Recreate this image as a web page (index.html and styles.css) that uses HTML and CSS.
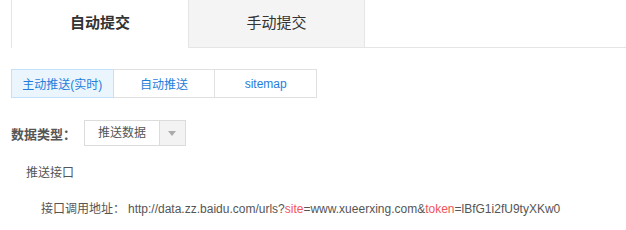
FILE: index.html
```html
<!DOCTYPE html>
<html>
<head>
  <title>链接提交</title>
  <link rel="stylesheet" href="styles.css">
</head>
<body>
  <section class="submit-wrap">
    <div class="tabs">
      <div class="tab tab-active">自动提交</div>
      <div class="tab">手动提交</div>
      <div class="tab-rest"></div>
    </div>

    <div class="btn-group">
      <button class="btn-opt btn-active">主动推送(实时)</button>
      <button class="btn-opt">自动推送</button>
      <button class="btn-opt">sitemap</button>
    </div>

    <div class="form-row">
      <span class="form-label">数据类型：</span>
      <div class="select-box">
        <span class="select-text">推送数据</span>
        <span class="select-arrow"></span>
      </div>
    </div>

    <h3 class="sub-title">推送接口</h3>

    <div class="api-row">
      <span class="api-label">接口调用地址：</span>
      <span class="api-url">http://data.zz.baidu.com/urls?<em class="hl">site</em>=www.xueerxing.com&amp;<em class="hl">token</em>=lBfG1i2fU9tyXKw0</span>
    </div>
  </section>
</body>
</html>
```

FILE: styles.css
```css
* {
  margin: 0;
  padding: 0;
  box-sizing: border-box;
  font-family: "Liberation Sans", Arial, "Noto Sans CJK SC", sans-serif;
}

body {
  background: #fff;
  color: #555;
}

.submit-wrap {
  padding-left: 11px;
}

.tabs {
  display: flex;
  height: 48px;
}

.tab {
  width: 177px;
  height: 48px;
  line-height: 46px;
  text-align: center;
  font-size: 15px;
  color: #333;
  background-color: #f4f4f4;
  border-left: 1px solid #e5e5e5;
  border-bottom: 1px solid #e5e5e5;
}

.tab + .tab {
  border-right: 1px solid #e5e5e5;
}

.tab-active {
  background-color: #fff;
  border-bottom: none;
  font-weight: 700;
}

.tab-rest {
  flex: 1;
  border-bottom: 1px solid #e5e5e5;
}

.btn-group {
  display: flex;
  margin-top: 21px;
}

.btn-opt {
  width: 102.67px;
  height: 29px;
  background-color: #fff;
  border: 1px solid #e0e0e0;
  margin-left: -1px;
  color: #1f7ddb;
  font-size: 12px;
  cursor: pointer;
}

.btn-opt:first-child {
  margin-left: 0;
}

.btn-active {
  background-color: #eaf5fe;
  border-color: #c3e2f9;
  position: relative;
}

.form-row {
  display: flex;
  align-items: center;
  margin-top: 22px;
}

.form-label {
  width: 73px;
  font-size: 13px;
  font-weight: 700;
  color: #555;
}

.select-box {
  display: flex;
  width: 102px;
  height: 26px;
  border: 1px solid #dcdcdc;
}

.select-text {
  flex: 1;
  line-height: 24px;
  text-align: center;
  font-size: 12px;
  color: #555;
  border-right: 1px solid #dcdcdc;
}

.select-arrow {
  width: 25px;
  background-color: #f3f3f3;
  position: relative;
}

.select-arrow::after {
  content: "";
  position: absolute;
  left: 8px;
  top: 10px;
  border-left: 4px solid transparent;
  border-right: 4px solid transparent;
  border-top: 5px solid #a9aca9;
}

.sub-title {
  margin: 18px 0 0 15px;
  font-size: 12px;
  font-weight: 400;
  line-height: 18px;
  color: #555;
}

.api-row {
  margin: 18px 0 0 30px;
  font-size: 12px;
  line-height: 18px;
  display: flex;
}

.api-label {
  width: 87px;
  color: #555;
}

.api-url {
  color: #555;
}

.hl {
  font-style: normal;
  color: #f2545b;
}
```
